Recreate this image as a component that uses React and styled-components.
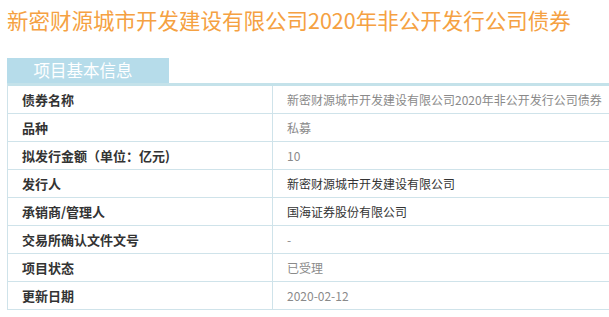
import React from 'react';
import styled, { createGlobalStyle } from 'styled-components';

const GlobalStyle = createGlobalStyle`
	html, body {
		margin: 0;
		padding: 0;
		background: #ffffff;
		overflow: hidden;
	}
	body {
		font-family: 'Noto Sans CJK SC', 'Noto Sans', sans-serif;
	}
`;

// Data
const rows = [
	{ label: '债券名称', value: '新密财源城市开发建设有限公司2020年非公开发行公司债券' },
	{ label: '品种', value: '私募' },
	{ label: '拟发行金额（单位：亿元)', value: '10' },
	{ label: '发行人', value: '新密财源城市开发建设有限公司', dark: true },
	{ label: '承销商/管理人', value: '国海证券股份有限公司', dark: true },
	{ label: '交易所确认文件文号', value: '-' },
	{ label: '项目状态', value: '已受理' },
	{ label: '更新日期', value: '2020-02-12' },
];

const App = () => {
	return (
		<>
			<GlobalStyle />
			<Page>
				<Title>新密财源城市开发建设有限公司2020年非公开发行公司债券</Title>
				<Section>
					<Tab>项目基本信息</Tab>
					<Table>
						{rows.map((row) => (
							<Row key={row.label}>
								<Label>{row.label}</Label>
								<Value $dark={row.dark}>{row.value}</Value>
							</Row>
						))}
					</Table>
				</Section>
			</Page>
		</>
	);
};

const Page = styled.div`
	padding-left: 7px;
`;

const Title = styled.h1`
	margin: 0;
	height: 40px;
	line-height: 40px;
	font-size: 21.5px;
	font-weight: normal;
	color: #f5a142;
	white-space: nowrap;
`;

const Section = styled.div`
	margin-top: 18px;
`;

const Tab = styled.div`
	width: 162px;
	height: 25px;
	line-height: 25px;
	padding-right: 10px;
	box-sizing: border-box;
	text-align: center;
	background: #b6dcea;
	color: #ffffff;
	font-size: 16.5px;
`;

const Table = styled.div`
	border-top: 3px solid #c4e2ea;
	border-left: 1px solid #cfe3ea;
`;

const Row = styled.div`
	display: grid;
	grid-template-columns: 265px 1fr;
	height: 28px;
	box-sizing: border-box;
	border-bottom: 1px solid #cfe3ea;
`;

const Label = styled.div`
	display: flex;
	align-items: center;
	padding-left: 14px;
	border-right: 1px solid #cfe3ea;
	font-size: 13px;
	font-weight: bold;
	color: #333333;
	white-space: nowrap;
`;

const Value = styled.div`
	display: flex;
	align-items: center;
	padding-left: 14px;
	font-size: 12px;
	color: ${(props) => (props.$dark ? '#333333' : '#8a8a8a')};
	white-space: nowrap;
	min-width: 0;
	overflow: hidden;
`;

export default App;
